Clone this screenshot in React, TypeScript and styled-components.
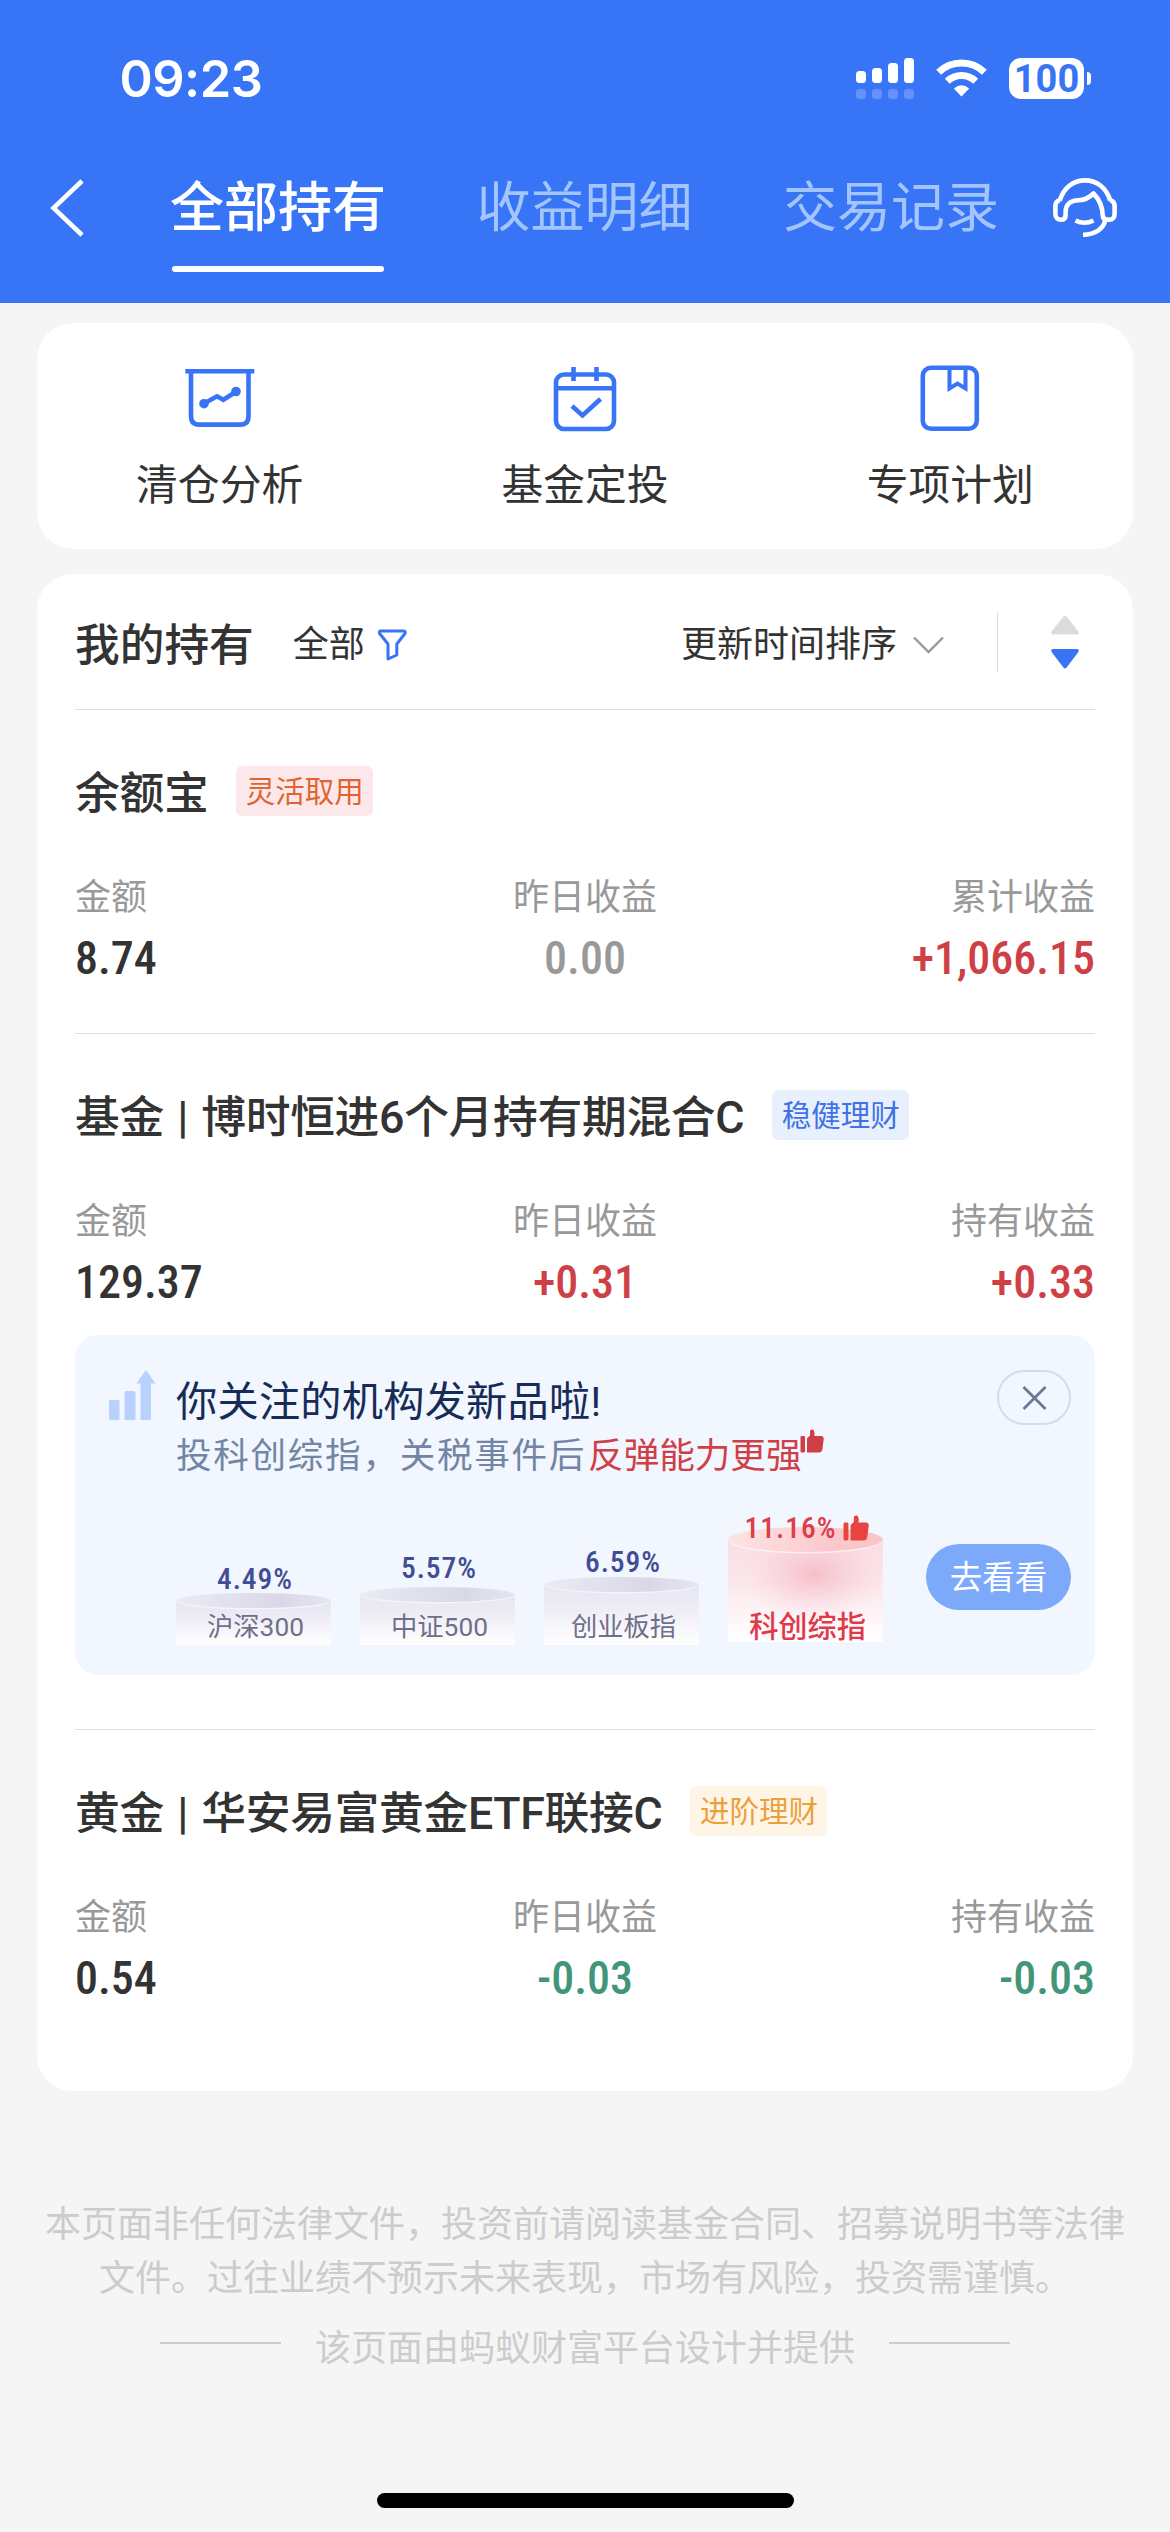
import React from 'react';
import styled, { createGlobalStyle } from 'styled-components';

const BLUE = '#3875f6';

const GlobalStyle = createGlobalStyle`
  * { box-sizing: border-box; }
  body {
    margin: 0;
    background: #f5f5f5;
    font-family: Roboto, "Noto Sans CJK SC", sans-serif;
    color: #333;
  }
  svg { display: block; flex: none; }
`;

const Page = styled.div`
  width: 1170px;
  height: 2532px;
  display: flex;
  flex-direction: column;
  background: #f5f5f5;
  overflow: hidden;
`;

/* ---------- header ---------- */

const Header = styled.header`
  height: 303px;
  background: ${BLUE};
  color: #fff;
`;

const StatusBar = styled.div`
  height: 156px;
  padding: 0 79px 0 119.5px;
  display: flex;
  align-items: center;
  justify-content: space-between;
`;

const Clock = styled.span`
  font-family: Inter, sans-serif;
  font-size: 50.5px;
  font-weight: 600;
  letter-spacing: -0.5px;
`;

const StatusIcons = styled.div`
  display: flex;
  align-items: center;
  gap: 22px;
`;

const Battery = styled.div`
  display: flex;
  align-items: center;
  gap: 3px;
`;

const BatteryBody = styled.div`
  width: 75px;
  height: 41px;
  border-radius: 12px;
  background: #fff;
  color: ${BLUE};
  font: 700 38px/42px Roboto, sans-serif;
  text-align: center;
`;

const BatteryTip = styled.div`
  width: 4px;
  height: 13px;
  border-radius: 0 5px 5px 0;
  background: #fff;
`;

const NavBar = styled.nav`
  height: 147px;
  padding: 22px 52px 0 49px;
  display: flex;
  align-items: flex-start;
`;

const Tabs = styled.div`
  display: flex;
  gap: 90.5px;
  margin: 0 54px 0 85px;
`;

const Tab = styled.div<{ $active?: boolean }>`
  width: 216px;
  display: flex;
  flex-direction: column;
  align-items: center;
  font-size: 54px;
  line-height: 62px;
  white-space: nowrap;
  font-weight: ${p => (p.$active ? 500 : 400)};
  color: ${p => (p.$active ? '#fff' : '#a3c5fd')};

  &::after {
    content: '';
    width: 212px;
    height: 6px;
    margin-top: 26px;
    border-radius: 3px;
    background: ${p => (p.$active ? '#fff' : 'transparent')};
  }
`;

/* ---------- cards ---------- */

const Card = styled.section`
  margin: 0 37px;
  border-radius: 36px;
  background: #fff;
`;

const Shortcuts = styled(Card)`
  height: 226px;
  margin-top: 20px;
  padding-top: 38px;
  display: grid;
  grid-template-columns: repeat(3, 1fr);
`;

const Shortcut = styled.div`
  display: flex;
  flex-direction: column;
  align-items: center;
  gap: 24px;
  font-size: 41.8px;
  line-height: 50px;
`;

const Holdings = styled(Card)`
  height: 1517px;
  margin-top: 25px;
  padding: 0 38px;
`;

const HoldingsHead = styled.div`
  height: 135px;
  display: flex;
  align-items: center;
  padding-top: 6px;
`;

const Heading = styled.h1`
  margin: 2px 39px 0 0;
  font-size: 44.7px;
  font-weight: 500;
  line-height: 56px;
`;

const Picker = styled.span`
  display: flex;
  align-items: center;
  gap: 12px;
  font-size: 36px;
  line-height: 50px;
`;

const Sorting = styled(Picker)`
  margin-left: auto;
  gap: 16px;
`;

const Separator = styled.i`
  width: 1px;
  height: 60px;
  margin: 0 52px 6px 53px;
  background: #ddd;
`;

const SortArrows = styled.div`
  margin: 0 15px 5px 0;
`;

const Item = styled.article<{ $bottom?: number }>`
  border-top: 1px solid #dedede;
  padding: 56px 0 ${p => p.$bottom ?? 50}px;
`;

const TitleRow = styled.div`
  height: 50px;
  display: flex;
  align-items: center;
  gap: 28px;
`;

const Title = styled.h2`
  margin: 0;
  padding-top: 5px;
  font-size: 44.8px;
  font-weight: 500;
  line-height: 50px;
  letter-spacing: -0.35px;
  white-space: pre;
  word-spacing: 2.5px;
`;

const toneStyles = {
  orange: { bg: '#fce8ea', fg: '#e0642f' },
  blue: { bg: '#e8f0fd', fg: '#3f72e6' },
  amber: { bg: '#fef5e6', fg: '#eca03c' },
};

const Tag = styled.span<{ $tone: keyof typeof toneStyles }>`
  width: 137px;
  height: 50px;
  border-radius: 6px;
  text-align: center;
  font-size: 29.5px;
  line-height: 52px;
  background: ${p => toneStyles[p.$tone].bg};
  color: ${p => toneStyles[p.$tone].fg};
`;

const Metrics = styled.div`
  margin-top: 57px;
  display: grid;
  grid-template-columns: repeat(3, 1fr);
`;

const Metric = styled.div`
  display: flex;
  flex-direction: column;
  gap: 11px;
  text-align: center;
  &:first-child { text-align: left; }
  &:last-child { text-align: right; }
`;

const MetricLabel = styled.span`
  font-size: 36px;
  line-height: 50px;
  color: #999;
`;

const MetricValue = styled.span<{ $color?: string }>`
  font-size: 46px;
  font-weight: 500;
  font-stretch: 85%;
  line-height: 49px;
  color: ${p => p.$color ?? '#333'};
`;

/* ---------- promo banner ---------- */

const Banner = styled.aside`
  height: 340px;
  margin-top: 28px;
  padding: 35px 24px 0 34px;
  border-radius: 24px;
  background: #f1f6ff;
`;

const BannerHead = styled.div`
  height: 113px;
  display: flex;
  align-items: flex-start;
`;

const BannerText = styled.div`
  flex: 1;
  padding: 5px 0 0 20px;
  line-height: 54px;
  white-space: nowrap;
`;

const BannerTitle = styled.div`
  font-size: 41.2px;
  letter-spacing: 0.25px;
  color: #162c56;
`;

const BannerSub = styled.div`
  display: flex;
  font-size: 35.6px;
  color: #7385a5;
`;

const SubLead = styled.span`
  letter-spacing: 1.7px;
  margin-right: 2px;
`;

const SubAccent = styled.span`
  margin-right: -2px;
  color: #cf4046;
`;

const CloseButton = styled.button`
  width: 74px;
  height: 55px;
  padding: 0;
  display: flex;
  align-items: center;
  justify-content: center;
  border: 2px solid #d6dbe8;
  border-radius: 28px;
  background: transparent;
`;

const BannerBody = styled.div`
  height: 162px;
  padding-left: 67px;
  display: flex;
  align-items: flex-end;
  gap: 29px;
`;

const Pedestal = styled.div<{ $hot?: boolean }>`
  width: 155px;
  padding-bottom: ${p => (p.$hot ? 3 : 0)}px;
  display: flex;
  flex-direction: column;
  align-items: center;
`;

const Percent = styled.div<{ $hot?: boolean; $gap: number }>`
  position: relative;
  z-index: 1;
  display: flex;
  align-items: center;
  gap: 7px;
  margin-bottom: ${p => p.$gap}px;
  padding-left: 3px;
  font-size: 29.5px;
  font-weight: 500;
  font-stretch: 85%;
  line-height: 28px;
  letter-spacing: 1px;
  color: ${p => (p.$hot ? '#dc3e4a' : '#414d95')};
`;

const Drum = styled.div<{ $height: number }>`
  position: relative;
  width: 155px;
  height: ${p => p.$height}px;
  display: flex;
  align-items: flex-end;
  justify-content: center;

  > svg { position: absolute; inset: 0; }
`;

const DrumLabel = styled.span<{ $hot?: boolean }>`
  position: relative;
  padding-left: 4px;
  font-size: ${p => (p.$hot ? 29.2 : 26.3)}px;
  font-weight: ${p => (p.$hot ? 500 : 400)};
  line-height: ${p => (p.$hot ? 30 : 35)}px;
  color: ${p => (p.$hot ? '#e0394a' : '#6f6f8a')};
`;

const GoButton = styled.button`
  width: 146px;
  height: 66px;
  margin: 0 0 35px 14px;
  padding: 0;
  border: 0;
  border-radius: 33px;
  background: #7da9fa;
  color: #fff;
  font: 400 32.5px/68px Roboto, "Noto Sans CJK SC", sans-serif;
`;

/* ---------- footer ---------- */

const Footer = styled.footer`
  margin-top: 107px;
  font-size: 36px;
  line-height: 54px;
  text-align: center;
  color: #ccc;
  white-space: nowrap;
`;

const Provider = styled.div`
  margin-top: 16px;
  display: flex;
  justify-content: center;
  gap: 34px;

  &::before, &::after {
    content: '';
    width: 121px;
    height: 2px;
    margin-top: 20px;
    background: #ccc;
  }
`;

const HomeIndicator = styled.div`
  width: 417px;
  height: 15px;
  margin: auto auto 24px;
  border-radius: 8px;
  background: #000;
`;

/* ---------- icons ---------- */

const SignalIcon = () => (
  <svg width="58" height="41" fill="#fff">
    {[[13, 12], [10, 15], [5, 20], [0, 25]].map(([y, h], i) => (
      <g key={i}>
        <rect x={i * 16} y={y} width="10" height={h} rx="3.5" />
        <rect x={i * 16} y="31" width="10" height="10" rx="3.5" opacity="0.22" />
      </g>
    ))}
  </svg>
);

const WifiIcon = () => (
  <svg width="51" height="38" viewBox="0 0 51 38" fill="none" stroke="#fff" strokeWidth="7">
    <path d="M2.6 13.2A33 33 0 0 1 48.4 13.2" />
    <path d="M11.3 22.3A20.5 20.5 0 0 1 39.7 22.3" />
    <path d="M25.5 37.5L17.8 29.6Q25.5 22.8 33.2 29.6Z" fill="#fff" stroke="none" />
  </svg>
);

const BackIcon = () => (
  <svg width="36" height="60" viewBox="0 0 36 60" fill="none" stroke="#fff" strokeWidth="4.5">
    <path d="M33 3L4.5 30L33 57" />
  </svg>
);

const ServiceIcon = () => (
  <svg width="64" height="60" viewBox="0 0 64 60" fill="none" stroke="#fff" strokeWidth="4.6" strokeLinejoin="round">
    <path d="M6.8 22.5C10.5 10 20 2.4 32 2.4S53.5 10 57.2 22.5" />
    <path d="M7 22C3.4 23 2.4 25 2.4 28V36C2.4 40 4.8 41.8 8 41.8C11 41.8 12.6 40 12.6 37V34C12.6 26 18 22.4 25 22.3C32 22.2 36 20 40.5 15.5C46.5 21.5 49.5 28 49.8 38C50 41 53 41.8 56 41.8C60 41.8 61.6 39 61.6 36V28C61.6 25 60.6 23 57 22" />
    <path d="M52.5 41.5C50.5 51 42 56.8 30 56.8" />
    <path d="M22.5 42.5Q31.5 47 40.5 42.5" />
  </svg>
);

const AnalysisIcon = () => (
  <svg width="76" height="76" viewBox="0 0 76 76" fill="none" stroke={BLUE} strokeWidth="4.6">
    <path d="M3.3 10.3H72.3" />
    <path d="M9 10V55Q9 63.6 17 63.6H58.5Q66.5 63.6 66.5 55V10" />
    <path d="M22 42.5L35 35.3L41.3 38.8L54 30.7" />
    <circle cx="22" cy="42.7" r="4.8" fill={BLUE} stroke="none" />
    <circle cx="54" cy="30.5" r="4.8" fill={BLUE} stroke="none" />
  </svg>
);

const CalendarIcon = () => (
  <svg width="76" height="76" viewBox="0 0 76 76" fill="none" stroke={BLUE} strokeWidth="4.6">
    <rect x="9" y="13.5" width="58" height="54.5" rx="8" />
    <path d="M9 27.3H67M26.5 6V20M49.5 6V20" />
    <path d="M25 45L35.5 54.5L53.5 38" />
  </svg>
);

const PlanIcon = () => (
  <svg width="76" height="76" viewBox="0 0 76 76" fill="none" stroke={BLUE} strokeWidth="4.6">
    <rect x="10.8" y="6.8" width="54" height="61" rx="8" />
    <path d="M37.5 7V27.5L45.5 22.5L53.5 27.5V7" strokeWidth="4" />
  </svg>
);

const FilterIcon = () => (
  <svg width="31" height="32" viewBox="0 0 31 32" fill="none" stroke={BLUE} strokeWidth="3" strokeLinejoin="round">
    <path d="M4 2H26.5Q29 2 28 4.5L19.8 15V26L11 30V15L2.6 4.5Q1.5 2 4 2Z" />
  </svg>
);

const ChevronIcon = () => (
  <svg width="31" height="18" viewBox="0 0 31 18" fill="none" stroke="#999" strokeWidth="2.4">
    <path d="M1 1.5L15.5 16L30 1.5" />
  </svg>
);

const ArrowsIcon = () => (
  <svg width="30" height="54" viewBox="0 0 30 54">
    <path d="M13.6 1.2Q15 0 16.4 1.2L28.4 16.5Q29.5 19.5 27 19.5H3Q.5 19.5 1.6 16.5Z" fill="#dcdcdc" />
    <path d="M13.6 52.8Q15 54 16.4 52.8L28.4 37Q29.5 34 27 34H3Q.5 34 1.6 37Z" fill={BLUE} />
  </svg>
);

const GrowthIcon = () => (
  <svg width="47" height="50" viewBox="0 0 47 50" fill="#b9d1fd">
    <rect x="0" y="30" width="10.5" height="20" rx="1.5" />
    <rect x="15.5" y="21" width="11" height="29" rx="1.5" />
    <path d="M31.5 48.5V13.5H27.5L37 0L46.5 13.5H42V48.5Q42 50 40.5 50H33Q31.5 50 31.5 48.5Z" />
  </svg>
);

const CloseIcon = () => (
  <svg width="25" height="24" viewBox="0 0 25 24" fill="none" stroke="#6b7a94" strokeWidth="2.8">
    <path d="M1.5 1L23.5 23M23.5 1L1.5 23" />
  </svg>
);

const ThumbIcon = ({ size, color }: { size: number; color: string }) => (
  <svg width={size} height={size} viewBox="0 0 24 24" fill={color}>
    <rect x="0.5" y="7" width="4.5" height="16.5" rx="1.3" />
    <path d="M7 9.3L10 6.5V2.5C10 .3 13.2 -.2 14 1.8C14.7 3.6 14.6 5.2 14.3 7H21C23 7 24 8.5 23.7 10.5L22.3 20.5C22 22.5 20.8 23.5 18.8 23.5H7Z" />
  </svg>
);

const DrumShape = ({ height, hot }: { height: number; hot?: boolean }) => {
  const id = hot ? 'hot' : `cool${height}`;
  const ry = hot ? 12.5 : 7.5;
  return (
    <svg width="155" height={height}>
      <defs>
        <linearGradient id={`${id}-side`} x1="0" y1="0" x2="0" y2="1">
          <stop offset="0" stopColor={hot ? '#fbdde2' : '#e6e5f1'} />
          <stop offset="0.4" stopColor={hot ? '#fbe6eb' : '#eeedf6'} />
          <stop offset="1" stopColor="#fff" />
        </linearGradient>
        <linearGradient id={`${id}-top`} x1="0" y1="0" x2="1" y2="0">
          <stop offset="0" stopColor={hot ? '#fde4e6' : '#ebebf5'} />
          <stop offset="0.68" stopColor={hot ? '#fac8cc' : '#d8d8e7'} />
          <stop offset="1" stopColor={hot ? '#fac5c8' : '#e6e6f2'} />
        </linearGradient>
        <radialGradient id={`${id}-glow`} cx="0.56" cy="0.34" r="0.46">
          <stop offset="0" stopColor="#f2a9b8" stopOpacity="0.65" />
          <stop offset="1" stopColor="#f8c8d2" stopOpacity="0" />
        </radialGradient>
      </defs>
      <path d={`M0 ${ry}H155V${height}H0Z`} fill={`url(#${id}-side)`} />
      {hot && <rect y={ry} width="155" height={height - ry} fill={`url(#${id}-glow)`} />}
      <ellipse cx="77.5" cy={ry + 0.7} rx="77.5" ry={ry + 0.7} fill="#fff" opacity="0.6" />
      <ellipse cx="77.5" cy={ry} rx="77.5" ry={ry} fill={`url(#${id}-top)`} />
    </svg>
  );
};

/* ---------- data ---------- */

const RED = '#cf4046';
const GREEN = '#43957a';

type MetricData = [label: string, value: string, color?: string];

const yuebao: MetricData[] = [
  ['金额', '8.74'],
  ['昨日收益', '0.00', '#999'],
  ['累计收益', '+1,066.15', RED],
];
const fund: MetricData[] = [
  ['金额', '129.37'],
  ['昨日收益', '+0.31', RED],
  ['持有收益', '+0.33', RED],
];
const gold: MetricData[] = [
  ['金额', '0.54'],
  ['昨日收益', '-0.03', GREEN],
  ['持有收益', '-0.03', GREEN],
];

const indices = [
  { name: '沪深300', pct: '4.49%', height: 52, gap: 0 },
  { name: '中证500', pct: '5.57%', height: 58, gap: 5 },
  { name: '创业板指', pct: '6.59%', height: 68, gap: 1 },
  { name: '科创综指', pct: '11.16%', height: 115, gap: -15, hot: true },
];

const MetricGrid = ({ data }: { data: MetricData[] }) => (
  <Metrics>
    {data.map(([label, value, color]) => (
      <Metric key={label}>
        <MetricLabel>{label}</MetricLabel>
        <MetricValue $color={color}>{value}</MetricValue>
      </Metric>
    ))}
  </Metrics>
);

export default function App() {
  return (
    <Page>
      <GlobalStyle />
      <Header>
        <StatusBar>
          <Clock>09:23</Clock>
          <StatusIcons>
            <SignalIcon />
            <WifiIcon />
            <Battery>
              <BatteryBody>100</BatteryBody>
              <BatteryTip />
            </Battery>
          </StatusIcons>
        </StatusBar>
        <NavBar>
          <BackIcon />
          <Tabs>
            <Tab $active>全部持有</Tab>
            <Tab>收益明细</Tab>
            <Tab>交易记录</Tab>
          </Tabs>
          <ServiceIcon />
        </NavBar>
      </Header>

      <Shortcuts>
        <Shortcut><AnalysisIcon />清仓分析</Shortcut>
        <Shortcut><CalendarIcon />基金定投</Shortcut>
        <Shortcut><PlanIcon />专项计划</Shortcut>
      </Shortcuts>

      <Holdings>
        <HoldingsHead>
          <Heading>我的持有</Heading>
          <Picker>全部<FilterIcon /></Picker>
          <Sorting>更新时间排序<ChevronIcon /></Sorting>
          <Separator />
          <SortArrows><ArrowsIcon /></SortArrows>
        </HoldingsHead>

        <Item>
          <TitleRow>
            <Title>余额宝</Title>
            <Tag $tone="orange">灵活取用</Tag>
          </TitleRow>
          <MetricGrid data={yuebao} />
        </Item>

        <Item $bottom={54}>
          <TitleRow>
            <Title>基金 | 博时恒进6个月持有期混合C</Title>
            <Tag $tone="blue">稳健理财</Tag>
          </TitleRow>
          <MetricGrid data={fund} />
          <Banner>
            <BannerHead>
              <GrowthIcon />
              <BannerText>
                <BannerTitle>你关注的机构发新品啦!</BannerTitle>
                <BannerSub>
                  <SubLead>投科创综指，关税事件后</SubLead>
                  <SubAccent>反弹能力更强</SubAccent>
                  <ThumbIcon size={24} color={RED} />
                </BannerSub>
              </BannerText>
              <CloseButton aria-label="关闭"><CloseIcon /></CloseButton>
            </BannerHead>
            <BannerBody>
              {indices.map(({ name, pct, height, gap, hot }) => (
                <Pedestal key={name} $hot={hot}>
                  <Percent $hot={hot} $gap={gap}>
                    {pct}
                    {hot && <ThumbIcon size={26} color="#e8443f" />}
                  </Percent>
                  <Drum $height={height}>
                    <DrumShape height={height} hot={hot} />
                    <DrumLabel $hot={hot}>{name}</DrumLabel>
                  </Drum>
                </Pedestal>
              ))}
              <GoButton>去看看</GoButton>
            </BannerBody>
          </Banner>
        </Item>

        <Item>
          <TitleRow>
            <Title>黄金 | 华安易富黄金ETF联接C</Title>
            <Tag $tone="amber">进阶理财</Tag>
          </TitleRow>
          <MetricGrid data={gold} />
        </Item>
      </Holdings>

      <Footer>
        本页面非任何法律文件，投资前请阅读基金合同、招募说明书等法律
        <br />
        文件。过往业绩不预示未来表现，市场有风险，投资需谨慎。
        <Provider>该页面由蚂蚁财富平台设计并提供</Provider>
      </Footer>
      <HomeIndicator />
    </Page>
  );
}
